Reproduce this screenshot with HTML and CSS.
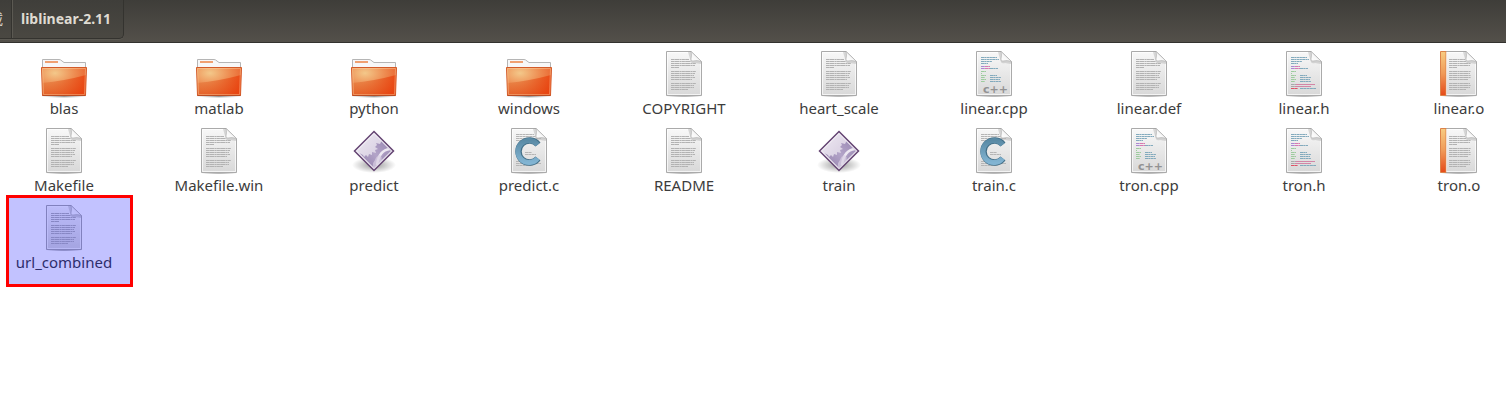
FILE: index.html
```html
<!DOCTYPE html>
<html lang="en">
<head>
<meta charset="utf-8">
<title>liblinear-2.11</title>
<link rel="stylesheet" href="styles.css">
</head>
<body>
<svg class="sprite" aria-hidden="true">
  <defs>
    <linearGradient id="paper" x1="0" y1="0" x2="0" y2="1"><stop offset="0" stop-color="#f8f8f8"/><stop offset="1" stop-color="#d8d8d8"/></linearGradient>
    <linearGradient id="curl" x1="0" y1="1" x2="1" y2="0"><stop offset="0" stop-color="#ffffff"/><stop offset=".5" stop-color="#f6f6f6"/><stop offset="1" stop-color="#cccccc"/></linearGradient>
    <radialGradient id="shade" cx=".5" cy=".5" r=".5"><stop offset="0" stop-color="#000" stop-opacity=".4"/><stop offset="1" stop-color="#000" stop-opacity="0"/></radialGradient>
    <radialGradient id="orange" cx=".3" cy=".2" r=".9"><stop offset="0" stop-color="#f3c88a"/><stop offset=".5" stop-color="#ee8b50"/><stop offset="1" stop-color="#e75220"/></radialGradient>
    <linearGradient id="lower" x1="0" y1="0" x2="1" y2="0"><stop offset="0" stop-color="#df6a2c" stop-opacity=".4"/><stop offset="1" stop-color="#e93c08" stop-opacity=".7"/></linearGradient>
    <linearGradient id="strip" x1="0" y1="0" x2="0" y2="1"><stop offset="0" stop-color="#f7cc82"/><stop offset=".5" stop-color="#f09a58"/><stop offset="1" stop-color="#e64a19"/></linearGradient>
    <linearGradient id="blue" x1="0" y1="0" x2="0" y2="1"><stop offset="0" stop-color="#5a8ba6"/><stop offset="1" stop-color="#82b4d2"/></linearGradient>
    <linearGradient id="violet" x1="0" y1="0" x2="1" y2="1"><stop offset="0" stop-color="#f0ecf4"/><stop offset="1" stop-color="#c9bdd6"/></linearGradient>
    <linearGradient id="cog" x1="0" y1="1" x2="1" y2="0"><stop offset="0" stop-color="#8f7ca9"/><stop offset=".5" stop-color="#b3a4c8"/><stop offset="1" stop-color="#9886b2"/></linearGradient>

    <g id="sheet">
      <ellipse cx="24" cy="46" rx="19" ry="1.500" fill="url(#shade)"/>
      <path d="M6.500 1.500H31L41.500 11.500V45.500H6.500Z" fill="url(#paper)" stroke="#aaa"/>
      <path d="M7.500 2.500H30M7.500 2.500V44.500H40.500V13" fill="none" stroke="#fff" opacity=".7"/>
      <path d="M28 2L31 12Q32 14 35 13L41 14V11L31 1.500Z" fill="#777" opacity=".25"/>
      <path d="M31 1.500Q32 5 31 9Q30.500 11.500 33 11Q37 10 41.500 11.500Z" fill="url(#curl)" stroke="#b3b3b3" stroke-width=".7"/>
    </g>
    <g id="writing" fill="none" stroke="#b2b2b2" stroke-dasharray="3 .3 5 .3 2 .3">
      <path d="M11 9.500H29M11 11.500H31M11 13.500H36M11 15.500H35M11 17.500H19M11 21.500H36M11 23.500H35M11 25.500H34M11 27.500H35M11 29.500H32M11 33.500H36M11 35.500H34M11 37.500H34M11 39.500H28"/>
    </g>
    <g id="code" fill="none" stroke-dasharray="3 .3 2 .3">
      <path d="M11 7.500H27M11 9.500H29M11 11.500H22M11 13.500H18M20 18.500H28M20 25.500H27M20 27.500H31M20 29.500H30M20 31.500H31" stroke="#82aabd"/>
      <path d="M11 16.500H15M11 18.500H15" stroke="#ad86d2"/>
      <path d="M15 16.500H20M15 18.500H20" stroke="#d779b1"/>
      <path d="M11 21.500H16M11 23.500H12M11 25.500H16M11 27.500H15M11 29.500H16M11 31.500H15" stroke="#9dcc9e"/>
    </g>
    <g id="gear">
      <path d="M9 26L13 28L14 30L16 28L18 30L19 27L22 28L22 25L26 26L25 23L28 22L25 20L27 18L26 16L30 17L32 13L42 24L24 42Z" fill="url(#cog)"/>
      <path d="M40 22Q29 23 27 38" fill="none" stroke="#ece7f1" stroke-width="2.500"/>
      <path d="M30 28Q26 29 25 33Q22 36 23 42L33 33Z" fill="#d8cfe2" opacity=".7"/>
      <path d="M40 24Q33 25 31 33Z" fill="#a797bd"/>
    </g>

    <symbol id="folder" viewBox="0 0 48 48">
      <ellipse cx="24" cy="46.500" rx="23" ry="1.500" fill="url(#shade)"/>
      <path d="M2.500 18V9.500H19Q20.500 9.500 22 11L24 12.500H45.500V18Z" fill="#f7f7f7" stroke="#b5b5b5"/>
      <path d="M5 12H18" stroke="#f0a070" stroke-width="2"/>
      <path d="M1.500 17.500H46.500L45.500 45.500H2.500Z" fill="url(#orange)" stroke="#d35a28" stroke-linejoin="round"/>
      <path d="M2 33Q24 31 46 25L45 45H3Z" fill="url(#lower)"/>
      <path d="M2.500 18.500H45.500L44.500 44.500H3.500Z" fill="none" stroke="#ffd6a8" opacity=".4"/>
      <path d="M2.500 45.500H45.500" stroke="#b94c22"/>
    </symbol>
    <symbol id="text" viewBox="0 0 48 48"><use href="#sheet"/><use href="#writing"/></symbol>
    <symbol id="cpp" viewBox="0 0 48 48">
      <use href="#sheet"/><use href="#code"/>
      <text x="13" y="43" class="cpp-mark">c++</text>
    </symbol>
    <symbol id="header" viewBox="0 0 48 48">
      <use href="#sheet"/><use href="#code"/>
      <g fill="none" stroke-dasharray="3 .3"><path d="M11 34.500H35M11 36.500H31" stroke="#a9a9a9"/><path d="M16 34.500H35M15 36.500H31" stroke="#d782a6"/><path d="M11 38.500H18" stroke="#dd5365"/><path d="M20 38.500H36" stroke="#82aabd"/></g>
    </symbol>
    <symbol id="object" viewBox="0 0 48 48">
      <use href="#sheet"/>
      <g fill="none" stroke="#b2b2b2" stroke-dasharray="3 .3 5 .3 2 .3">
        <path d="M14 9.500H30M14 11.500H31M14 13.500H36M14 15.500H35M14 17.500H22M14 21.500H36M14 23.500H35M14 25.500H36M14 27.500H36M14 29.500H33M14 33.500H35M14 35.500H36M14 37.500H35M14 39.500H31"/>
      </g>
      <path d="M5.500 1.500H11V45.500H5.500Z" fill="url(#strip)" stroke="#dc8248"/>
      <path d="M11.500 2V45" stroke="#fff" opacity=".5"/>
    </symbol>
    <symbol id="csource" viewBox="0 0 48 48">
      <use href="#sheet"/>
      <path d="M11 7.500H29M11 9.500H31M11 11.500H36M11 13.500H18M11 34.500H19M11 36.500H36M11 38.500H28M20 25.500H27M20 27.500H31" stroke="#b5b5b5" fill="none" stroke-dasharray="3 .3"/>
      <path d="M33 17.500A11 11 0 1 0 33 31.500" fill="none" stroke="#426f88" stroke-width="6.500"/>
      <path d="M32.700 17.800A11 11 0 1 0 32.700 31.200" fill="none" stroke="url(#blue)" stroke-width="5"/>
    </symbol>
    <symbol id="program" viewBox="0 0 48 48">
      <ellipse cx="24" cy="38" rx="22" ry="8" fill="url(#shade)"/>
      <path d="M24 4.500L43.500 24L24 43.500L4.500 24Z" fill="url(#violet)" stroke="#654573" stroke-width="1.500"/>
      <clipPath id="diamond"><path d="M24 7L41 24L24 41L7 24Z"/></clipPath>
      <g clip-path="url(#diamond)"><use href="#gear"/></g>
      <path d="M24 6.500L41.500 24L24 41.500L6.500 24Z" fill="none" stroke="#fff" opacity=".6"/>
    </symbol>
  </defs>
</svg>

<header class="toolbar">
  <nav class="path" aria-label="Location">
    <button class="crumb crumb-parent" type="button">载</button>
    <button class="crumb crumb-current" type="button">liblinear-2.11</button>
  </nav>
</header>
<main>
  <ul class="files">
    <li class="file"><svg class="icon"><use href="#folder"/></svg><span>blas</span></li>
    <li class="file"><svg class="icon"><use href="#folder"/></svg><span>matlab</span></li>
    <li class="file"><svg class="icon"><use href="#folder"/></svg><span>python</span></li>
    <li class="file"><svg class="icon"><use href="#folder"/></svg><span>windows</span></li>
    <li class="file"><svg class="icon"><use href="#text"/></svg><span>COPYRIGHT</span></li>
    <li class="file"><svg class="icon"><use href="#text"/></svg><span>heart_scale</span></li>
    <li class="file"><svg class="icon"><use href="#cpp"/></svg><span>linear.cpp</span></li>
    <li class="file"><svg class="icon"><use href="#text"/></svg><span>linear.def</span></li>
    <li class="file"><svg class="icon"><use href="#header"/></svg><span>linear.h</span></li>
    <li class="file"><svg class="icon"><use href="#object"/></svg><span>linear.o</span></li>
    <li class="file"><svg class="icon"><use href="#text"/></svg><span>Makefile</span></li>
    <li class="file"><svg class="icon"><use href="#text"/></svg><span>Makefile.win</span></li>
    <li class="file"><svg class="icon"><use href="#program"/></svg><span>predict</span></li>
    <li class="file"><svg class="icon"><use href="#csource"/></svg><span>predict.c</span></li>
    <li class="file"><svg class="icon"><use href="#text"/></svg><span>README</span></li>
    <li class="file"><svg class="icon"><use href="#program"/></svg><span>train</span></li>
    <li class="file"><svg class="icon"><use href="#csource"/></svg><span>train.c</span></li>
    <li class="file"><svg class="icon"><use href="#cpp"/></svg><span>tron.cpp</span></li>
    <li class="file"><svg class="icon"><use href="#header"/></svg><span>tron.h</span></li>
    <li class="file"><svg class="icon"><use href="#object"/></svg><span>tron.o</span></li>
    <li class="file marked"><svg class="icon"><use href="#text"/></svg><span>url_combined</span></li>
  </ul>
</main>
</body>
</html>
```
FILE: styles.css
```css
* { box-sizing: border-box; }

body {
  min-height: 100vh;
  margin: 0;
  background: #fff;
  color: #3c3c3c;
  font: 15px/20px "Noto Sans", "Noto Sans CJK SC", sans-serif;
}

.sprite {
  position: absolute;
  width: 0;
  height: 0;
}

.toolbar {
  height: 43px;
  background: linear-gradient(#3e3d39, #53504a);
  border-bottom: 1px solid #33322e;
}

.path {
  display: flex;
  height: 39px;
}

.crumb {
  border: 1px solid #34332f;
  border-top: 0;
  background: linear-gradient(#3f3e3a, #4a4842);
  color: #dfdbd2;
  font: bold 14px/20px "Noto Sans", "Noto Sans CJK SC", sans-serif;
  white-space: nowrap;
  box-shadow: 0 1px 0 #5b5952;
}

.crumb-parent {
  display: flex;
  justify-content: flex-end;
  align-items: center;
  width: 11px;
  padding: 0 8px 0 0;
  border-width: 0 0 1px;
  overflow: hidden;
  font-weight: normal;
}

.crumb-current {
  padding: 0 12px 0 9px;
  border-radius: 0 0 5px 0;
  box-shadow: 0 1px 0 #5b5952, inset 1px 0 0 #5b5952;
}

.files {
  display: grid;
  grid-template-columns: repeat(10, 94px);
  justify-content: space-between;
  row-gap: 9px;
  margin: 0;
  padding: 7px 0 24px 17px;
  list-style: none;
}

.file {
  position: relative;
  display: flex;
  flex-direction: column;
  align-items: center;
  white-space: nowrap;
}

.icon {
  width: 48px;
  height: 48px;
}

.cpp-mark {
  fill: #929292;
  font: bold 11px "DejaVu Sans", sans-serif;
}

.marked::after {
  content: "";
  position: absolute;
  inset: -9px -22px -15px -11px;
  border: 3px solid #f00;
  background: rgba(0, 0, 255, 0.24);
}
```
